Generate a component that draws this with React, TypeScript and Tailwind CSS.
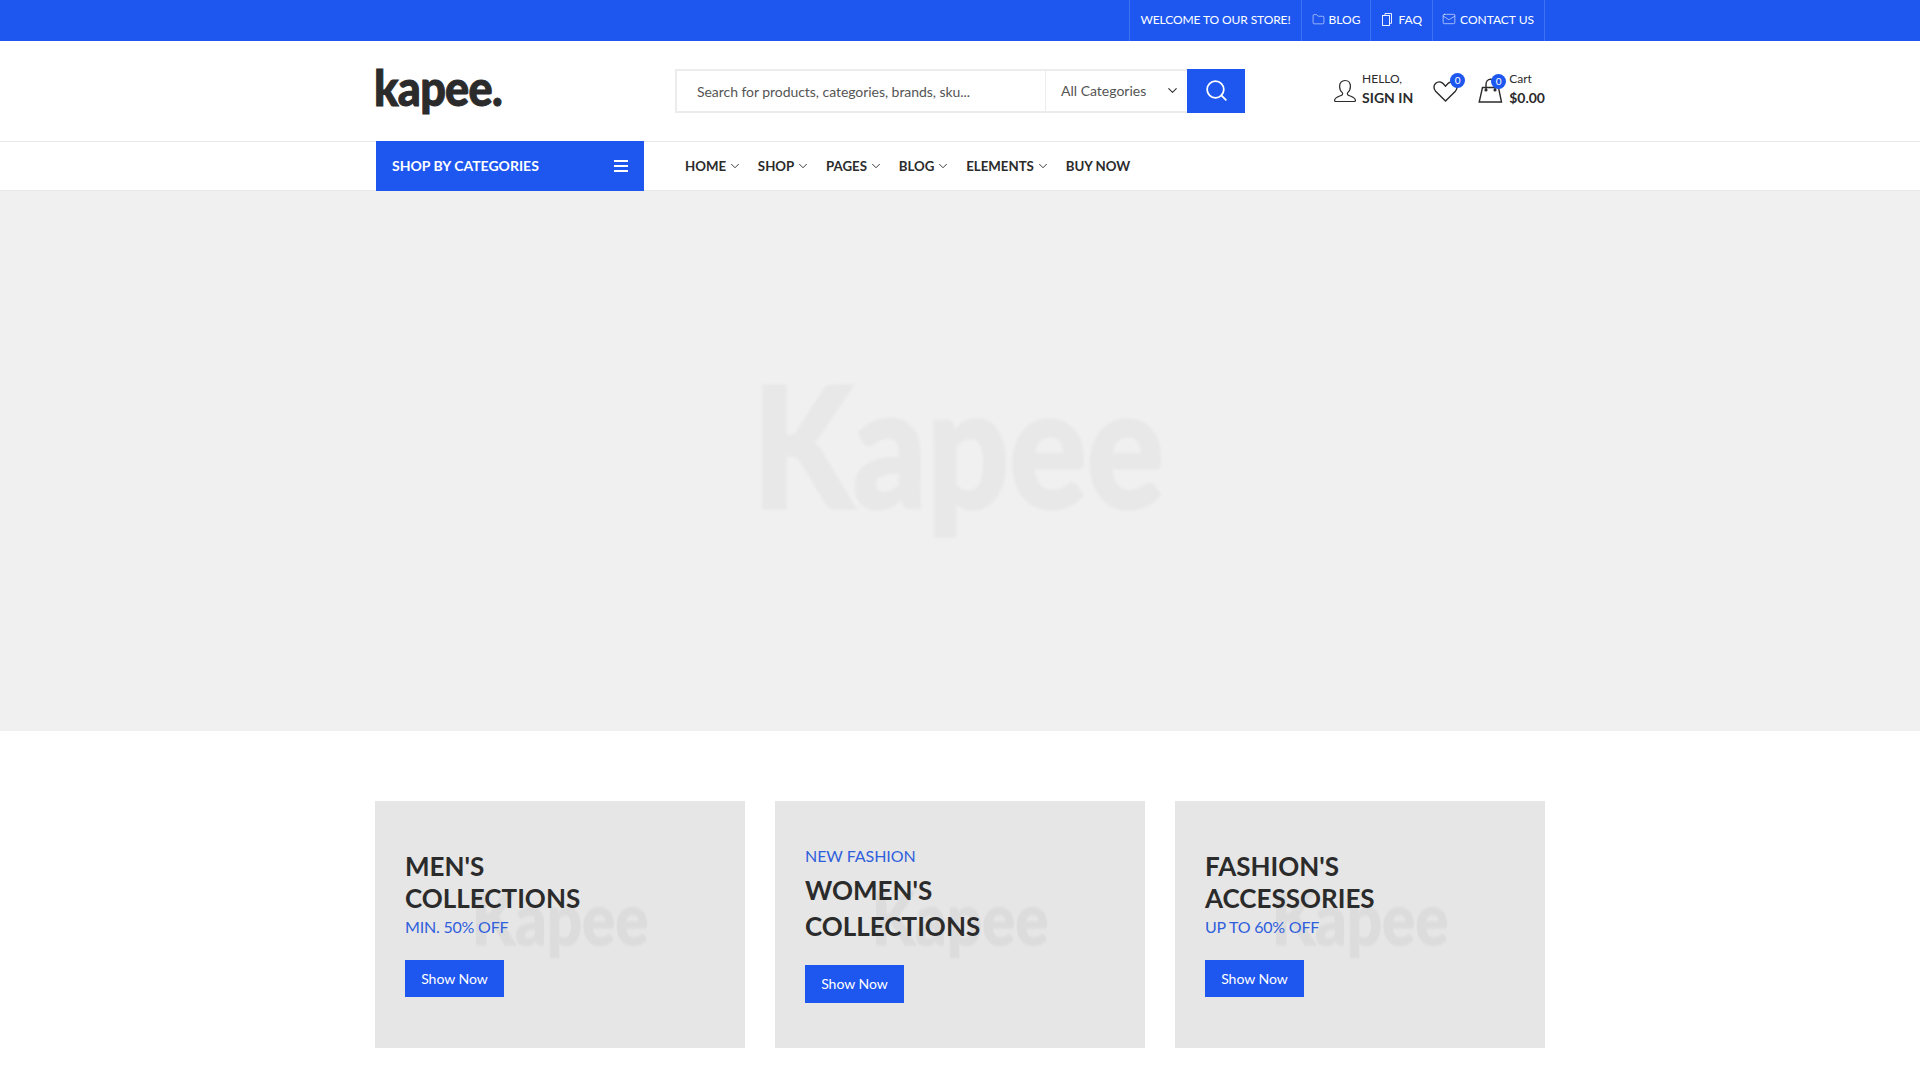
import { ChevronDown, Folder, Mail, Search } from "lucide-react";

const blue = "bg-[#1e57f0]";

function Bar({ children, icon, tight, className = "" }: { children: React.ReactNode; icon?: React.ReactNode; tight?: boolean; className?: string }) {
  return (
    <div className={`h-full flex items-center gap-[4px] pr-[10px] pb-[1px] border-l border-[#3f71f3] whitespace-nowrap ${tight ? "tracking-[-0.1px]" : ""} ${className || "pl-[10px]"}`}>
      {icon && <span className="-mt-[2px]">{icon}</span>}
      <span>{children}</span>
    </div>
  );
}

function NavItem({ label, caret = true }: { label: string; caret?: boolean }) {
  return (
    <div className="flex items-center gap-[2px] text-[13.25px] font-bold text-[#2b2b2b] whitespace-nowrap">
      <span>{label}</span>
      {caret && <ChevronDown size={14} strokeWidth={1.5} className="-mt-[2px] text-[#222]" />}
    </div>
  );
}

function UserIcon() {
  return (
    <svg width="24" height="24" viewBox="0 0 24 24" fill="none" stroke="#2b2b2b" strokeWidth="1.2">
      <path d="M12 1.5c-3.4 0-5.4 2.6-5.4 6 0 2.7 1.2 4.9 2.7 6.1.5.5.4 1.9-.3 2.4-1.7 1.2-7.2 2.2-7.4 5.2-.1.7.3 1.3 1 1.3h18.8c.7 0 1.1-.6 1-1.3-.2-3-5.7-4-7.4-5.2-.7-.5-.8-1.9-.3-2.4 1.5-1.2 2.7-3.4 2.7-6.1 0-3.4-2-6-5.4-6z" />
    </svg>
  );
}

function HeartIcon() {
  return (
    <svg width="25" height="24" viewBox="0 0 25 24" fill="none" stroke="#2b2b2b" strokeWidth="1.4">
      <path d="M12.5 22 2.6 12.2C.3 9.8.5 6.3 2.7 4.3c2.3-2 5.5-1.7 7.6.4l2.2 2.4 2.2-2.4c2.1-2.1 5.3-2.4 7.6-.4 2.2 2 2.4 5.5.1 7.9z" />
    </svg>
  );
}

function BagIcon() {
  return (
    <svg width="25" height="26" viewBox="0 0 25 26" fill="none" stroke="#2b2b2b" strokeWidth="1.4">
      <path d="M4.5 9.5h16l3 14.5H1.2z" />
      <path d="M8 12V6.5C8 3.5 10 1.2 12.5 1.2S17 3.5 17 6.5V12" />
      <circle cx="8" cy="12" r="0.9" fill="#2b2b2b" />
      <circle cx="17" cy="12" r="0.9" fill="#2b2b2b" />
    </svg>
  );
}

function DocIcon() {
  return (
    <svg width="13" height="13" viewBox="0 0 13 13" fill="none" stroke="currentColor" strokeWidth="0.9">
      <rect x="1.5" y="2.5" width="7" height="10" />
      <path d="M4 2.5V.5h6.5v9.8H8.5" />
    </svg>
  );
}

function Badge({ className }: { className: string }) {
  return (
    <span className={`absolute w-[15px] h-[15px] rounded-full ${blue} text-white text-[10px] leading-[15px] text-center ${className}`}>
      0
    </span>
  );
}

function Button({ tall }: { tall?: boolean }) {
  return (
    <div className={`${blue} text-white text-[14px] w-[99px] flex items-center justify-center ${tall ? "h-[38px] mb-[1px]" : "h-[37px]"}`}>
      Show Now
    </div>
  );
}

function Watermark() {
  return (
    <div className="absolute left-[97px] top-[76px] text-[72px] leading-[80px] font-black text-[#dcdcdc] [-webkit-text-stroke:1px_#dcdcdc] scale-x-[0.86] origin-left blur-[0.8px] select-none">
      Kapee
    </div>
  );
}

function Card({ children }: { children: React.ReactNode }) {
  return (
    <div className="relative bg-[#e6e6e6] h-[247px] px-[30px] pb-[2px] flex flex-col justify-center overflow-hidden">
      <Watermark />
      <div className="relative">{children}</div>
    </div>
  );
}

export default function App() {
  return (
    <div className="min-h-screen bg-white font-['Lato','Liberation_Sans',sans-serif] text-[#2b2b2b] overflow-hidden">
      {/* top bar */}
      <div className={`${blue} h-[41px] text-white text-[12px]`}>
        <div className="w-[1170px] mx-auto h-full flex justify-end">
          <div className="flex h-full border-r border-[#3f71f3]">
            <Bar tight>WELCOME TO OUR STORE!</Bar>
            <Bar icon={<Folder size={13} strokeWidth={1} />}>BLOG</Bar>
            <Bar icon={<DocIcon />}>FAQ</Bar>
            <Bar icon={<Mail size={14} strokeWidth={1} />} className="pl-[9px]">CONTACT US</Bar>
          </div>
        </div>
      </div>

      {/* header */}
      <div className="h-[100px]">
        <div className="w-[1170px] mx-auto h-full flex items-center">
          <div className="w-[300px] -mt-[9px]">
            <div className="text-[50px] leading-none font-black tracking-[-0.8px] [-webkit-text-stroke:1px_#2b2b2b] scale-x-[0.9] origin-left text-[#2b2b2b] -translate-x-[1px]">kapee.</div>
          </div>
          <div className="w-[570px] h-[44px] flex">
            <div className="flex-1 border-2 border-r-0 border-[#ececec] flex items-center pl-[20px] text-[14px] tracking-[-0.05px] text-[#555]">
              Search for products, categories, brands, sku...
            </div>
            <div className="w-[142px] border-y-2 border-l border-[#ececec] flex items-center justify-between pl-[15px] pr-[7px] pb-[1px] text-[14px] text-[#555]">
              <span>All Categories</span>
              <ChevronDown size={15} strokeWidth={1.8} className="text-[#333]" />
            </div>
            <div className={`w-[58px] ${blue} flex items-center justify-center`}>
              <Search size={25} strokeWidth={1.7} className="text-white -mt-[1px]" />
            </div>
          </div>
          <div className="flex-1 flex items-center justify-end">
            <div className="flex items-center gap-[5px]">
              <UserIcon />
              <div className="leading-none -mt-[4px]">
                <div className="text-[12px] leading-[16px]">HELLO,</div>
                <div className="text-[14px] leading-[21px] font-bold">SIGN IN</div>
              </div>
            </div>
            <div className="relative ml-[20px]">
              <HeartIcon />
              <Badge className="-top-[6px] left-[17px]" />
            </div>
            <div className="relative ml-[20px] flex items-center">
              <BagIcon />
              <Badge className="-top-[1px] left-[13px]" />
              <div className="ml-[6px] leading-none -mt-[4px]">
                <div className="text-[12px] leading-[16px]">Cart</div>
                <div className="text-[14px] leading-[21px] font-bold">$0.00</div>
              </div>
            </div>
          </div>
        </div>
      </div>

      {/* nav */}
      <div className="h-[50px] border-y border-[#e8e8e8]">
        <div className="w-[1170px] mx-auto h-full flex items-center">
          <div className={`${blue} ml-[1px] w-[268px] h-[50px] -my-px flex items-center justify-between px-[16px] pb-[1px] text-white text-[14px] font-bold`}>
            <span>SHOP BY CATEGORIES</span>
            <svg width="14" height="12" viewBox="0 0 14 12" fill="white">
              <rect y="0" width="14" height="2" />
              <rect y="5" width="14" height="2" />
              <rect y="10" width="14" height="2" />
            </svg>
          </div>
          <div className="ml-[41px] pt-[1px] flex items-center gap-[15.8px]">
            <NavItem label="HOME" />
            <NavItem label="SHOP" />
            <NavItem label="PAGES" />
            <NavItem label="BLOG" />
            <NavItem label="ELEMENTS" />
            <NavItem label="BUY NOW" caret={false} />
          </div>
        </div>
      </div>

      {/* hero */}
      <div className="h-[540px] bg-[#f0f0f0] flex items-center justify-center">
        <div className="text-[168px] leading-none font-black text-[#e8e8e8] [-webkit-text-stroke:3px_#e8e8e8] scale-x-[0.86] blur-[1px] select-none -mt-[36px] -ml-[4px]">Kapee</div>
      </div>

      {/* cards */}
      <div className="w-[1170px] mx-auto mt-[70px] grid grid-cols-3 gap-[30px] pb-[32px]">
        <Card>
          <div className="text-[26px] leading-[32px] font-bold">MEN'S<br />COLLECTIONS</div>
          <div className="text-[16px] leading-[24px] tracking-[-0.2px] text-[#2f5fdc] mt-[1px] mb-[21px]">MIN. 50% OFF</div>
          <Button />
        </Card>
        <Card>
          <div className="text-[16px] leading-[24px] tracking-[-0.05px] text-[#2f5fdc]">NEW FASHION</div>
          <div className="text-[26px] leading-[36px] font-bold mt-[4px] mb-[21px]">WOMEN'S<br />COLLECTIONS</div>
          <Button tall />
        </Card>
        <Card>
          <div className="text-[26px] leading-[32px] font-bold">FASHION'S<br />ACCESSORIES</div>
          <div className="text-[16px] leading-[24px] tracking-[-0.2px] text-[#2f5fdc] mt-[1px] mb-[21px]">UP TO 60% OFF</div>
          <Button />
        </Card>
      </div>
    </div>
  );
}
